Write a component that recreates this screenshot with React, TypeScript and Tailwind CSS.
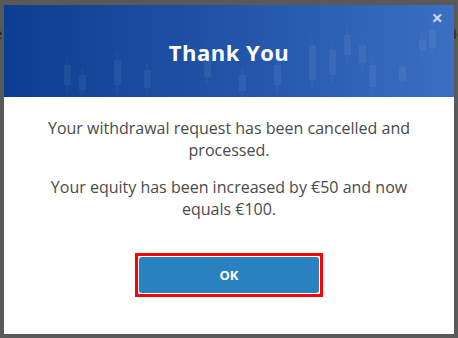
import React from "react";

const candles = [
  { x: 60, y: 60, h: 20 }, { x: 75, y: 70, h: 15 }, { x: 110, y: 55, h: 25 }, { x: 140, y: 65, h: 18 },
  { x: 200, y: 50, h: 22 }, { x: 235, y: 70, h: 16 }, { x: 270, y: 60, h: 20 }, { x: 305, y: 40, h: 35 },
  { x: 325, y: 45, h: 25 }, { x: 340, y: 30, h: 20 }, { x: 355, y: 40, h: 18 }, { x: 365, y: 60, h: 22 },
  { x: 395, y: 62, h: 14 }, { x: 415, y: 35, h: 10 }, { x: 425, y: 25, h: 18 },
];

export default function App() {
  return (
    <div
      className="relative w-[458px] h-[338px] bg-[#595959] overflow-hidden"
      style={{ fontFamily: '"Open Sans", sans-serif' }}
    >
      <div className="absolute left-[-6px] top-[22px] w-[480px] flex justify-between text-[15px] text-[#222]">
        <span>e</span>
        <span className="pr-[10px]">ic</span>
      </div>
      <div className="relative ml-[4px] mt-[5px] w-[450px] h-[329px] bg-white flex flex-col">
        <div className="relative h-[92px] bg-gradient-to-r from-[#0b3d91] via-[#2154a8] to-[#3a6fc2] flex items-center justify-center overflow-hidden">
          <svg className="absolute inset-0" width="450" height="92" viewBox="0 0 450 92">
            {candles.map((c, i) => (
              <g key={i} opacity="0.06">
                <line x1={c.x + 3} y1={c.y - 8} x2={c.x + 3} y2={c.y + c.h + 8} stroke="#ffffff" strokeWidth="1" />
                <rect x={c.x} y={c.y} width="7" height={c.h} fill="#ffffff" />
              </g>
            ))}
          </svg>
          <h1 className="relative text-white text-[22px] font-bold tracking-[0.5px] mt-[2px]">Thank You</h1>
          <span className="absolute right-[11px] top-[1px] text-[#c9d4e6] text-[20px] font-bold leading-[24px]">×</span>
        </div>
        <div className="flex flex-col items-center text-center text-[16px] leading-[22px] text-[#4a4a4a] pt-[20px]">
          <p className="w-[400px]">Your withdrawal request has been cancelled and processed.</p>
          <p className="w-[400px] mt-[15px]">Your equity has been increased by €50 and now equals €100.</p>
          <div className="mt-[33px] border-[3px] border-[#ff0000] p-[1px]">
            <button className="w-[180px] h-[36px] bg-[#2a81c0] rounded-[3px] text-white text-[13px] font-bold">
              OK
            </button>
          </div>
        </div>
      </div>
    </div>
  );
}
